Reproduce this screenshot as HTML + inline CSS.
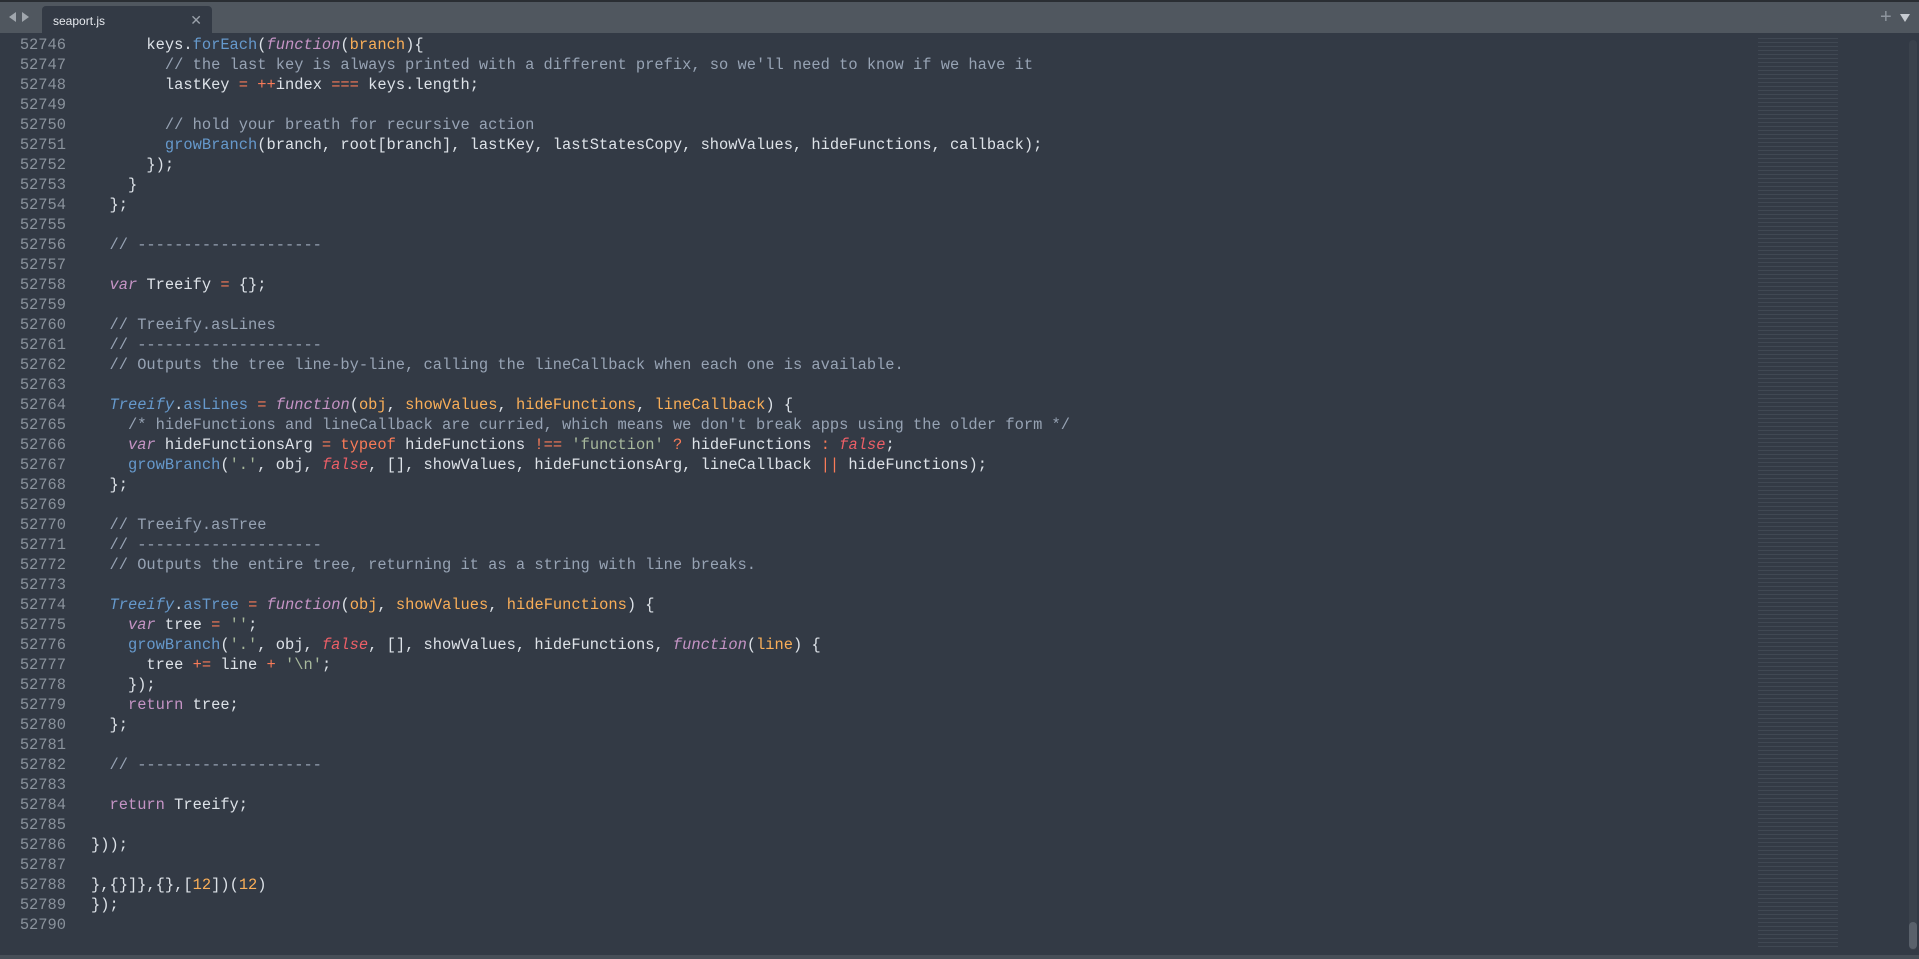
<!DOCTYPE html>
<html><head><meta charset="utf-8"><style>
html,body{margin:0;padding:0;width:1919px;height:959px;overflow:hidden;background:#333a45;}
.top{position:absolute;left:0;top:0;width:1919px;height:33px;background:#50575f;border-top:2px solid #2a2e33;box-sizing:border-box;}
.tab{position:absolute;left:42px;top:4px;width:170px;height:29px;background:#333a45;border-radius:4px 4px 0 0;font:12px "Liberation Sans",sans-serif;color:#e6e9ee;}
.tab span.t{position:absolute;left:11px;top:8px;}
.tab span.x{position:absolute;right:10px;top:6px;color:#9aa1aa;font-size:14px;}
.arr{position:absolute;top:10px;width:0;height:0;border-top:5px solid transparent;border-bottom:5px solid transparent;}
.gut{position:absolute;left:0;top:35px;width:66px;text-align:right;font:15.4px/20px "Liberation Mono",monospace;color:#8a929c;white-space:pre;}
.code{position:absolute;left:91px;top:35px;font:15.4px/20px "Liberation Mono",monospace;color:#dde2e8;white-space:pre;}
.c{color:#97a3b4}.k{color:#c594c5;font-style:italic}.f{color:#6699cc}.p{color:#f9ae58}.o{color:#f97b58}.r{color:#ec5f67;font-style:italic}.s{color:#a7b89c}.ty{color:#6699cc;font-style:italic}.n{color:#f9ae58}.rt{color:#c594c5}
.mm{position:absolute;left:1758px;top:38px;width:80px;height:910px;background:repeating-linear-gradient(180deg,rgba(160,170,185,.12) 0 1px,transparent 1px 4px);}
.sb{position:absolute;left:1909px;top:40px;width:8px;height:910px;background:#3b424c;border-radius:4px}
.th{position:absolute;left:1909px;top:922px;width:8px;height:27px;background:#5a616b;border-radius:4px}
.bot{position:absolute;left:0;top:955px;width:1919px;height:4px;background:#474e57}
</style></head><body>
<div class="top">
<div class="arr" style="left:9px;border-right:7px solid #a0a6ad"></div>
<div class="arr" style="left:22px;border-left:7px solid #a0a6ad"></div>
<div class="tab"><span class="t">seaport.js</span><span class="x">✕</span></div>
<div style="position:absolute;left:1880px;top:4px;color:#8e959e;font:20px 'Liberation Sans',sans-serif">+</div>
<div class="arr" style="left:1900px;top:12px;border:none;border-left:5px solid transparent;border-right:5px solid transparent;border-top:8px solid #c6cbd1"></div>
</div>
<div class="gut">52746
52747
52748
52749
52750
52751
52752
52753
52754
52755
52756
52757
52758
52759
52760
52761
52762
52763
52764
52765
52766
52767
52768
52769
52770
52771
52772
52773
52774
52775
52776
52777
52778
52779
52780
52781
52782
52783
52784
52785
52786
52787
52788
52789
52790</div>
<div class="code">      keys.<span class="f">forEach</span>(<span class="k">function</span>(<span class="p">branch</span>){
        <span class="c">// the last key is always printed with a different prefix, so we'll need to know if we have it</span>
        lastKey <span class="o">=</span> <span class="o">++</span>index <span class="o">===</span> keys.length;

        <span class="c">// hold your breath for recursive action</span>
        <span class="f">growBranch</span>(branch, root[branch], lastKey, lastStatesCopy, showValues, hideFunctions, callback);
      });
    }
  };

  <span class="c">// --------------------</span>

  <span class="k">var</span> Treeify <span class="o">=</span> {};

  <span class="c">// Treeify.asLines</span>
  <span class="c">// --------------------</span>
  <span class="c">// Outputs the tree line-by-line, calling the lineCallback when each one is available.</span>

  <span class="ty">Treeify</span>.<span class="f">asLines</span> <span class="o">=</span> <span class="k">function</span>(<span class="p">obj</span>, <span class="p">showValues</span>, <span class="p">hideFunctions</span>, <span class="p">lineCallback</span>) {
    <span class="c">/* hideFunctions and lineCallback are curried, which means we don't break apps using the older form */</span>
    <span class="k">var</span> hideFunctionsArg <span class="o">=</span> <span class="o">typeof</span> hideFunctions <span class="o">!==</span> <span class="s">'function'</span> <span class="o">?</span> hideFunctions <span class="o">:</span> <span class="r">false</span>;
    <span class="f">growBranch</span>(<span class="s">'.'</span>, obj, <span class="r">false</span>, [], showValues, hideFunctionsArg, lineCallback <span class="o">||</span> hideFunctions);
  };

  <span class="c">// Treeify.asTree</span>
  <span class="c">// --------------------</span>
  <span class="c">// Outputs the entire tree, returning it as a string with line breaks.</span>

  <span class="ty">Treeify</span>.<span class="f">asTree</span> <span class="o">=</span> <span class="k">function</span>(<span class="p">obj</span>, <span class="p">showValues</span>, <span class="p">hideFunctions</span>) {
    <span class="k">var</span> tree <span class="o">=</span> <span class="s">''</span>;
    <span class="f">growBranch</span>(<span class="s">'.'</span>, obj, <span class="r">false</span>, [], showValues, hideFunctions, <span class="k">function</span>(<span class="p">line</span>) {
      tree <span class="o">+=</span> line <span class="o">+</span> <span class="s">'\n'</span>;
    });
    <span class="rt">return</span> tree;
  };

  <span class="c">// --------------------</span>

  <span class="rt">return</span> Treeify;

}));

},{}]},{},[<span class="n">12</span>])(<span class="n">12</span>)
});
</div>
<div class="mm"></div>
<div class="sb"></div><div class="th"></div>
<div class="bot"></div>
</body></html>
